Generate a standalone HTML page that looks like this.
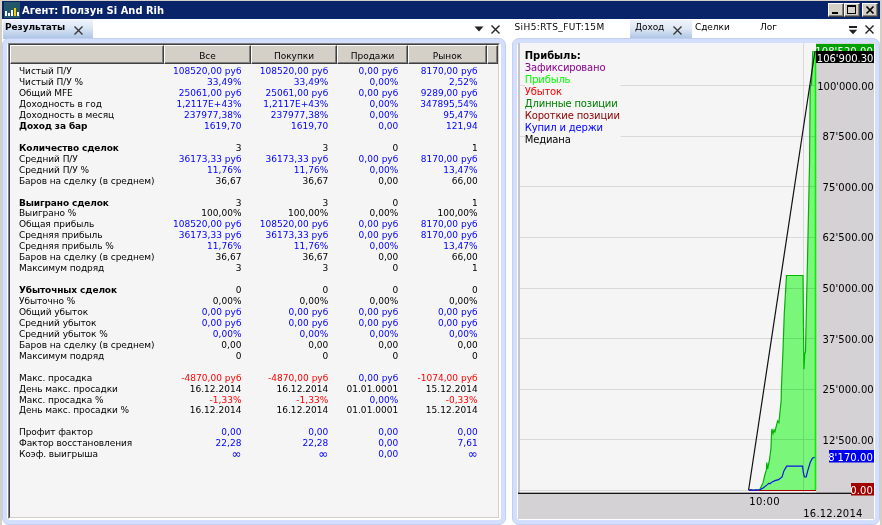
<!DOCTYPE html><html lang="ru"><head><meta charset="utf-8"><title>Агент: Ползун Si And Rih</title><style>
*{margin:0;padding:0;box-sizing:border-box}
html,body{width:882px;height:525px;overflow:hidden;background:#fff}
body{position:relative;font-family:"DejaVu Sans", "Liberation Sans", sans-serif;font-size:9px;line-height:11px;color:#000}
.abs{position:absolute}
.t{position:absolute;white-space:nowrap;height:11px;line-height:11px;letter-spacing:-0.07px}
.r{text-align:right;letter-spacing:0.03px}
.b{color:#0000ff} .k{color:#000} .rd{color:#ff0000}
.bold{font-weight:bold;letter-spacing:-0.12px}
.hc{position:absolute;top:45px;height:19px;background:#d4d0c8;border-left:1px solid #fff;border-top:1px solid #fff;border-right:1px solid #404040;border-bottom:1px solid #404040;text-align:center;line-height:17px}
.hc i{position:absolute;right:0;bottom:0;top:0;width:1px;background:#808080}
.hc b{position:absolute;left:0;right:0;bottom:0;height:1px;background:#808080}
.hc span{font-style:normal;font-weight:normal;position:relative;top:2px}
.wb{position:absolute;top:3px;width:16px;height:14px;background:#d4d0c8;border:1px solid;border-color:#fff #404040 #404040 #fff;box-shadow:inset -1px -1px 0 #808080}
</style></head><body><div id="root" style="position:absolute;left:0;top:0;width:882px;height:525px;will-change:transform">
<div class="abs" style="left:0;top:0;width:882px;height:525px;background:#d4d0c8"></div>
<div class="abs" style="left:2px;top:19px;width:878px;height:506px;background:#fff"></div>
<div class="abs" style="left:2px;top:1px;width:878px;height:18px;background:#0a246a"></div>
<svg class="abs" style="left:4px;top:2px" width="16" height="16" viewBox="0 0 16 16"><rect width="16" height="16" fill="#22576b"/><rect x="1" y="9" width="2" height="5" fill="#fff"/><rect x="4" y="11" width="2" height="3" fill="#fff"/><rect x="7" y="8" width="2" height="6" fill="#fff"/><rect x="10" y="6" width="2" height="8" fill="#ffcc00"/><rect x="13" y="10" width="2" height="4" fill="#fff"/></svg>
<div class="t bold" style="left:22px;top:4px;color:#fff;font-family:'DejaVu Sans Condensed','DejaVu Sans','Liberation Sans',sans-serif;font-size:11px;line-height:13px;height:13px;letter-spacing:0.02px" id="title">Агент: Ползун Si And Rih</div>
<div class="wb" style="left:828px"><svg width="14" height="12" style="position:absolute;left:0;top:0"><rect x="3" y="8" width="6" height="2" fill="#000"/></svg></div>
<div class="wb" style="left:844px"><svg width="14" height="12" style="position:absolute;left:0;top:0"><rect x="2.5" y="2" width="8" height="7.5" fill="none" stroke="#000" stroke-width="1"/><rect x="2" y="1" width="9" height="2" fill="#000"/></svg></div>
<div class="wb" style="left:862px"><svg width="14" height="12" style="position:absolute;left:0;top:0"><path d="M3.5 2.5 L10.5 9.5 M10.5 2.5 L3.5 9.5" stroke="#000" stroke-width="1.7" fill="none"/></svg></div>
<div class="abs" style="left:3px;top:20px;width:90px;height:19px;background:linear-gradient(#edf3fb,#dbe6f5 40%,#a9c3e4)"></div>
<div class="t bold" style="left:5px;top:22px;letter-spacing:-0.07px" id="tab1">Результаты</div>
<svg class="abs" style="left:73px;top:24.5px" width="12" height="12"><path d="M1.5 1.5 L9.5 9.5 M9.5 1.5 L1.5 9.5" stroke="#333" stroke-width="1.3" fill="none"/></svg>
<svg class="abs" style="left:474px;top:25px" width="10" height="8"><path d="M0.5 1.5 H9.5 L5 6.5 Z" fill="#222"/></svg>
<svg class="abs" style="left:490px;top:24px" width="12" height="12"><path d="M1.5 1.5 L9.5 9.5 M9.5 1.5 L1.5 9.5" stroke="#222" stroke-width="1.4" fill="none"/></svg>
<div class="abs" style="left:2px;top:38px;width:504px;height:487px;border-radius:7px;background:#d3dffc;border:1px solid #c2cef0"></div>
<div class="abs" style="left:7px;top:43px;width:494px;height:477px;background:#fff;border-radius:3px"></div>
<div class="abs" style="left:8px;top:43px;width:492px;height:476px;background:#f5f5f5;border:1px solid;border-color:#808080 #fff #fff #808080"></div>
<div class="abs" style="left:9px;top:44px;width:490px;height:474px;border:1px solid;border-color:#404040 #d4d0c8 #d4d0c8 #404040"></div>
<div class="hc" style="left:10px;width:154px"><i></i><b></b><span></span></div>
<div class="hc" style="left:164px;width:87px"><i></i><b></b><span>Все</span></div>
<div class="hc" style="left:251px;width:86px"><i></i><b></b><span>Покупки</span></div>
<div class="hc" style="left:337px;width:71px"><i></i><b></b><span>Продажи</span></div>
<div class="hc" style="left:408px;width:79px"><i></i><b></b><span>Рынок</span></div>
<div class="hc" style="left:487px;width:11px"><i></i><b></b><span></span></div>
<div class="t" style="left:19px;top:66px">Чистый П/У</div>
<div class="t r b" style="right:640.5px;top:66px">108520,00 руб</div>
<div class="t r b" style="right:553.7px;top:66px">108520,00 руб</div>
<div class="t r b" style="right:483.7px;top:66px">0,00 руб</div>
<div class="t r b" style="right:404.3px;top:66px">8170,00 руб</div>
<div class="t" style="left:19px;top:77px">Чистый П/У %</div>
<div class="t r b" style="right:640.5px;top:77px">33,49%</div>
<div class="t r b" style="right:553.7px;top:77px">33,49%</div>
<div class="t r b" style="right:483.7px;top:77px">0,00%</div>
<div class="t r b" style="right:404.3px;top:77px">2,52%</div>
<div class="t" style="left:19px;top:88px">Общий MFE</div>
<div class="t r b" style="right:640.5px;top:88px">25061,00 руб</div>
<div class="t r b" style="right:553.7px;top:88px">25061,00 руб</div>
<div class="t r b" style="right:483.7px;top:88px">0,00 руб</div>
<div class="t r b" style="right:404.3px;top:88px">9289,00 руб</div>
<div class="t" style="left:19px;top:99px">Доходность в год</div>
<div class="t r b" style="right:640.5px;top:99px">1,2117E+43%</div>
<div class="t r b" style="right:553.7px;top:99px">1,2117E+43%</div>
<div class="t r b" style="right:483.7px;top:99px">0,00%</div>
<div class="t r b" style="right:404.3px;top:99px">347895,54%</div>
<div class="t" style="left:19px;top:110px">Доходность в месяц</div>
<div class="t r b" style="right:640.5px;top:110px">237977,38%</div>
<div class="t r b" style="right:553.7px;top:110px">237977,38%</div>
<div class="t r b" style="right:483.7px;top:110px">0,00%</div>
<div class="t r b" style="right:404.3px;top:110px">95,47%</div>
<div class="t bold" style="left:19px;top:121px">Доход за бар</div>
<div class="t r b" style="right:640.5px;top:121px">1619,70</div>
<div class="t r b" style="right:553.7px;top:121px">1619,70</div>
<div class="t r b" style="right:483.7px;top:121px">0,00</div>
<div class="t r b" style="right:404.3px;top:121px">121,94</div>
<div class="t bold" style="left:19px;top:143px">Количество сделок</div>
<div class="t r k" style="right:640.5px;top:143px">3</div>
<div class="t r k" style="right:553.7px;top:143px">3</div>
<div class="t r k" style="right:483.7px;top:143px">0</div>
<div class="t r k" style="right:404.3px;top:143px">1</div>
<div class="t" style="left:19px;top:154px">Средний П/У</div>
<div class="t r b" style="right:640.5px;top:154px">36173,33 руб</div>
<div class="t r b" style="right:553.7px;top:154px">36173,33 руб</div>
<div class="t r b" style="right:483.7px;top:154px">0,00 руб</div>
<div class="t r b" style="right:404.3px;top:154px">8170,00 руб</div>
<div class="t" style="left:19px;top:165px">Средний П/У %</div>
<div class="t r b" style="right:640.5px;top:165px">11,76%</div>
<div class="t r b" style="right:553.7px;top:165px">11,76%</div>
<div class="t r b" style="right:483.7px;top:165px">0,00%</div>
<div class="t r b" style="right:404.3px;top:165px">13,47%</div>
<div class="t" style="left:19px;top:176px">Баров на сделку (в среднем)</div>
<div class="t r k" style="right:640.5px;top:176px">36,67</div>
<div class="t r k" style="right:553.7px;top:176px">36,67</div>
<div class="t r k" style="right:483.7px;top:176px">0,00</div>
<div class="t r k" style="right:404.3px;top:176px">66,00</div>
<div class="t bold" style="left:19px;top:198px">Выиграно сделок</div>
<div class="t r k" style="right:640.5px;top:198px">3</div>
<div class="t r k" style="right:553.7px;top:198px">3</div>
<div class="t r k" style="right:483.7px;top:198px">0</div>
<div class="t r k" style="right:404.3px;top:198px">1</div>
<div class="t" style="left:19px;top:208px">Выиграно %</div>
<div class="t r k" style="right:640.5px;top:208px">100,00%</div>
<div class="t r k" style="right:553.7px;top:208px">100,00%</div>
<div class="t r k" style="right:483.7px;top:208px">0,00%</div>
<div class="t r k" style="right:404.3px;top:208px">100,00%</div>
<div class="t" style="left:19px;top:219px">Общая прибыль</div>
<div class="t r b" style="right:640.5px;top:219px">108520,00 руб</div>
<div class="t r b" style="right:553.7px;top:219px">108520,00 руб</div>
<div class="t r b" style="right:483.7px;top:219px">0,00 руб</div>
<div class="t r b" style="right:404.3px;top:219px">8170,00 руб</div>
<div class="t" style="left:19px;top:230px">Средняя прибыль</div>
<div class="t r b" style="right:640.5px;top:230px">36173,33 руб</div>
<div class="t r b" style="right:553.7px;top:230px">36173,33 руб</div>
<div class="t r b" style="right:483.7px;top:230px">0,00 руб</div>
<div class="t r b" style="right:404.3px;top:230px">8170,00 руб</div>
<div class="t" style="left:19px;top:241px">Средняя прибыль %</div>
<div class="t r b" style="right:640.5px;top:241px">11,76%</div>
<div class="t r b" style="right:553.7px;top:241px">11,76%</div>
<div class="t r b" style="right:483.7px;top:241px">0,00%</div>
<div class="t r b" style="right:404.3px;top:241px">13,47%</div>
<div class="t" style="left:19px;top:252px">Баров на сделку (в среднем)</div>
<div class="t r k" style="right:640.5px;top:252px">36,67</div>
<div class="t r k" style="right:553.7px;top:252px">36,67</div>
<div class="t r k" style="right:483.7px;top:252px">0,00</div>
<div class="t r k" style="right:404.3px;top:252px">66,00</div>
<div class="t" style="left:19px;top:263px">Максимум подряд</div>
<div class="t r k" style="right:640.5px;top:263px">3</div>
<div class="t r k" style="right:553.7px;top:263px">3</div>
<div class="t r k" style="right:483.7px;top:263px">0</div>
<div class="t r k" style="right:404.3px;top:263px">1</div>
<div class="t bold" style="left:19px;top:285px">Убыточных сделок</div>
<div class="t r k" style="right:640.5px;top:285px">0</div>
<div class="t r k" style="right:553.7px;top:285px">0</div>
<div class="t r k" style="right:483.7px;top:285px">0</div>
<div class="t r k" style="right:404.3px;top:285px">0</div>
<div class="t" style="left:19px;top:296px">Убыточно %</div>
<div class="t r k" style="right:640.5px;top:296px">0,00%</div>
<div class="t r k" style="right:553.7px;top:296px">0,00%</div>
<div class="t r k" style="right:483.7px;top:296px">0,00%</div>
<div class="t r k" style="right:404.3px;top:296px">0,00%</div>
<div class="t" style="left:19px;top:307px">Общий убыток</div>
<div class="t r b" style="right:640.5px;top:307px">0,00 руб</div>
<div class="t r b" style="right:553.7px;top:307px">0,00 руб</div>
<div class="t r b" style="right:483.7px;top:307px">0,00 руб</div>
<div class="t r b" style="right:404.3px;top:307px">0,00 руб</div>
<div class="t" style="left:19px;top:318px">Средний убыток</div>
<div class="t r b" style="right:640.5px;top:318px">0,00 руб</div>
<div class="t r b" style="right:553.7px;top:318px">0,00 руб</div>
<div class="t r b" style="right:483.7px;top:318px">0,00 руб</div>
<div class="t r b" style="right:404.3px;top:318px">0,00 руб</div>
<div class="t" style="left:19px;top:329px">Средний убыток %</div>
<div class="t r b" style="right:640.5px;top:329px">0,00%</div>
<div class="t r b" style="right:553.7px;top:329px">0,00%</div>
<div class="t r b" style="right:483.7px;top:329px">0,00%</div>
<div class="t r b" style="right:404.3px;top:329px">0,00%</div>
<div class="t" style="left:19px;top:340px">Баров на сделку (в среднем)</div>
<div class="t r k" style="right:640.5px;top:340px">0,00</div>
<div class="t r k" style="right:553.7px;top:340px">0,00</div>
<div class="t r k" style="right:483.7px;top:340px">0,00</div>
<div class="t r k" style="right:404.3px;top:340px">0,00</div>
<div class="t" style="left:19px;top:351px">Максимум подряд</div>
<div class="t r k" style="right:640.5px;top:351px">0</div>
<div class="t r k" style="right:553.7px;top:351px">0</div>
<div class="t r k" style="right:483.7px;top:351px">0</div>
<div class="t r k" style="right:404.3px;top:351px">0</div>
<div class="t" style="left:19px;top:373px">Макс. просадка</div>
<div class="t r rd" style="right:640.5px;top:373px">-4870,00 руб</div>
<div class="t r rd" style="right:553.7px;top:373px">-4870,00 руб</div>
<div class="t r b" style="right:483.7px;top:373px">0,00 руб</div>
<div class="t r rd" style="right:404.3px;top:373px">-1074,00 руб</div>
<div class="t" style="left:19px;top:384px">День макс. просадки</div>
<div class="t r k" style="right:640.5px;top:384px">16.12.2014</div>
<div class="t r k" style="right:553.7px;top:384px">16.12.2014</div>
<div class="t r k" style="right:483.7px;top:384px">01.01.0001</div>
<div class="t r k" style="right:404.3px;top:384px">15.12.2014</div>
<div class="t" style="left:19px;top:395px">Макс. просадка %</div>
<div class="t r rd" style="right:640.5px;top:395px">-1,33%</div>
<div class="t r rd" style="right:553.7px;top:395px">-1,33%</div>
<div class="t r b" style="right:483.7px;top:395px">0,00%</div>
<div class="t r rd" style="right:404.3px;top:395px">-0,33%</div>
<div class="t" style="left:19px;top:405px">День макс. просадки %</div>
<div class="t r k" style="right:640.5px;top:405px">16.12.2014</div>
<div class="t r k" style="right:553.7px;top:405px">16.12.2014</div>
<div class="t r k" style="right:483.7px;top:405px">01.01.0001</div>
<div class="t r k" style="right:404.3px;top:405px">15.12.2014</div>
<div class="t" style="left:19px;top:427px">Профит фактор</div>
<div class="t r b" style="right:640.5px;top:427px">0,00</div>
<div class="t r b" style="right:553.7px;top:427px">0,00</div>
<div class="t r b" style="right:483.7px;top:427px">0,00</div>
<div class="t r b" style="right:404.3px;top:427px">0,00</div>
<div class="t" style="left:19px;top:438px">Фактор восстановления</div>
<div class="t r b" style="right:640.5px;top:438px">22,28</div>
<div class="t r b" style="right:553.7px;top:438px">22,28</div>
<div class="t r b" style="right:483.7px;top:438px">0,00</div>
<div class="t r b" style="right:404.3px;top:438px">7,61</div>
<div class="t" style="left:19px;top:449px">Коэф. выигрыша</div>
<div class="t r b" style="right:640.5px;top:449px"><span style="font-size:12px;line-height:0;position:relative;top:0.5px">∞</span></div>
<div class="t r b" style="right:553.7px;top:449px"><span style="font-size:12px;line-height:0;position:relative;top:0.5px">∞</span></div>
<div class="t r b" style="right:483.7px;top:449px">0,00</div>
<div class="t r b" style="right:404.3px;top:449px"><span style="font-size:12px;line-height:0;position:relative;top:0.5px">∞</span></div>
<div class="t" style="left:514.4px;top:22px;letter-spacing:0.42px" id="rt0">SiH5:RTS_FUT:15M</div>
<div class="abs" style="left:630px;top:20px;width:62px;height:19px;background:linear-gradient(#eef3fa,#dfe8f4 45%,#a9c3e4)"></div>
<div class="t" style="left:635px;top:22px" id="rt1">Доход</div>
<svg class="abs" style="left:672px;top:25px" width="12" height="12"><path d="M1.5 1.5 L9.5 9.5 M9.5 1.5 L1.5 9.5" stroke="#333" stroke-width="1.3" fill="none"/></svg>
<div class="t" style="left:695px;top:22px" id="rt2">Сделки</div>
<div class="t" style="left:760px;top:22px" id="rt3">Лог</div>
<svg class="abs" style="left:848px;top:25px" width="10" height="10"><rect x="1" y="1" width="8" height="2" fill="#222"/><path d="M0.8 4.7 H9.2 L5 9.2 Z" fill="#222"/></svg>
<svg class="abs" style="left:864px;top:24px" width="12" height="12"><path d="M1.5 1.5 L9.5 9.5 M9.5 1.5 L1.5 9.5" stroke="#222" stroke-width="1.4" fill="none"/></svg>
<div class="abs" style="left:512px;top:38px;width:368px;height:487px;border-radius:7px;background:#d3dffc;border:1px solid #c2cef0"></div>
<div class="abs" style="left:517px;top:43px;width:358px;height:477px;background:#fff;border-radius:3px"></div>
<svg class="abs" style="left:0;top:0" width="882" height="525" viewBox="0 0 882 525" font-family='"DejaVu Sans", "Liberation Sans", sans-serif' font-size="10" letter-spacing="0.09"><rect x="518" y="43" width="356" height="476" fill="#d5d2d5"/><rect x="518" y="43" width="298" height="450" fill="#f5f5f5"/><rect x="518" y="43" width="2" height="450" fill="#c8c4c8"/><line x1="520" x2="816" y1="490.5" y2="490.5" stroke="#d9d9d9" stroke-width="1"/><line x1="520" x2="816" y1="439.5" y2="439.5" stroke="#d9d9d9" stroke-width="1"/><line x1="520" x2="816" y1="389.5" y2="389.5" stroke="#d9d9d9" stroke-width="1"/><line x1="520" x2="816" y1="338.5" y2="338.5" stroke="#d9d9d9" stroke-width="1"/><line x1="520" x2="816" y1="288.5" y2="288.5" stroke="#d9d9d9" stroke-width="1"/><line x1="520" x2="816" y1="237.5" y2="237.5" stroke="#d9d9d9" stroke-width="1"/><line x1="520" x2="816" y1="186.5" y2="186.5" stroke="#d9d9d9" stroke-width="1"/><line x1="520" x2="816" y1="136.5" y2="136.5" stroke="#d9d9d9" stroke-width="1"/><line x1="520" x2="816" y1="85.5" y2="85.5" stroke="#d9d9d9" stroke-width="1"/><line x1="803.5" x2="803.5" y1="43" y2="496" stroke="#d9d9d9" stroke-width="1"/><rect x="525" y="47" width="95.5" height="100" fill="#f5f5f5"/><polygon points="749,490 759.5,490 761,487 763.1,482.4 764.6,476 766.4,469.7 766.8,462.5 767.6,468.8 769.5,459.8 770.9,448.9 771.8,429 773.1,433.5 774,429.9 774.9,431.7 777.6,420.8 778.9,422.6 780.3,409 781.2,400 781.4,388 783,350 784.3,313 786.5,275.5 803,275.5 803.5,330 804,369.3 804.7,354 805.5,352 806.6,300 807.5,260 809.6,160 810.2,86 811.5,85 812.8,51 815.5,51 815.5,490" fill="#7af67a"/><clipPath id="gc"><polygon points="749,490 759.5,490 761,487 763.1,482.4 764.6,476 766.4,469.7 766.8,462.5 767.6,468.8 769.5,459.8 770.9,448.9 771.8,429 773.1,433.5 774,429.9 774.9,431.7 777.6,420.8 778.9,422.6 780.3,409 781.2,400 781.4,388 783,350 784.3,313 786.5,275.5 803,275.5 803.5,330 804,369.3 804.7,354 805.5,352 806.6,300 807.5,260 809.6,160 810.2,86 811.5,85 812.8,51 815.5,51 815.5,490"/></clipPath><g clip-path="url(#gc)" stroke="#68dc68" stroke-width="1"><line x1="750" x2="815" y1="439.5" y2="439.5"/><line x1="750" x2="815" y1="389.5" y2="389.5"/><line x1="750" x2="815" y1="338.5" y2="338.5"/><line x1="750" x2="815" y1="288.5" y2="288.5"/><line x1="750" x2="815" y1="237.5" y2="237.5"/><line x1="750" x2="815" y1="186.5" y2="186.5"/><line x1="750" x2="815" y1="136.5" y2="136.5"/><line x1="750" x2="815" y1="85.5" y2="85.5"/><line x1="803.5" x2="803.5" y1="43" y2="490"/></g><polyline points="749,490 759.5,490 761,487 763.1,482.4 764.6,476 766.4,469.7 766.8,462.5 767.6,468.8 769.5,459.8 770.9,448.9 771.8,429 773.1,433.5 774,429.9 774.9,431.7 777.6,420.8 778.9,422.6 780.3,409 781.2,400 781.4,388 783,350 784.3,313 786.5,275.5 803,275.5 803.5,330 804,369.3 804.7,354 805.5,352 806.6,300 807.5,260 809.6,160 810.2,86 811.5,85 812.8,51" fill="none" stroke="#00b400" stroke-width="1.2"/><line x1="815.5" x2="815.5" y1="51" y2="490" stroke="#00f000" stroke-width="1.6"/><line x1="749" x2="816" y1="490.5" y2="490.5" stroke="#b00000" stroke-width="1"/><polyline points="748.6,490.3 751,489.6 753,490.4 756,489.8 759.5,490 763.1,487.9 766.7,485.1 769,483.2 770,483.8 772.2,481.9 775,480.6 778.5,479.7 782.1,477 784,470.7 786.7,466.1 802.6,466.1 803.3,472.5 804.4,477 806.2,477 807.5,471.6 810.2,462.5 812.4,458.3 814.6,457.2" fill="none" stroke="#0a14e6" stroke-width="1.2"/><line x1="748.6" y1="490" x2="815" y2="51" stroke="#111" stroke-width="1.2"/><rect x="518" y="492.7" width="333" height="1.2" fill="#000"/><text x="873.8" y="443.8" text-anchor="end" fill="#000">12'500.00</text><text x="873.8" y="393.2" text-anchor="end" fill="#000">25'000.00</text><text x="873.8" y="342.6" text-anchor="end" fill="#000">37'500.00</text><text x="873.8" y="292.0" text-anchor="end" fill="#000">50'000.00</text><text x="873.8" y="241.4" text-anchor="end" fill="#000">62'500.00</text><text x="873.8" y="190.8" text-anchor="end" fill="#000">75'000.00</text><text x="873.8" y="140.2" text-anchor="end" fill="#000">87'500.00</text><text x="873.8" y="89.6" text-anchor="end" fill="#000" letter-spacing="-0.03">100'000.00</text><rect x="816" y="44" width="58" height="8" fill="#00a000"/><svg x="816" y="44" width="58" height="7" overflow="hidden"><text x="57" y="11" text-anchor="end" fill="#fff" font-size="10">108'520.00</text></svg><rect x="816" y="51" width="58" height="12" fill="#000"/><text x="873.4" y="61.5" text-anchor="end" fill="#fff" letter-spacing="-0.03">106'900.30</text><rect x="829" y="450" width="45" height="12.5" fill="#0000f0"/><text x="873" y="460.5" text-anchor="end" fill="#fff">8'170.00</text><rect x="851" y="483" width="23" height="12.5" fill="#a00000"/><text x="873" y="493.5" text-anchor="end" fill="#fff">0.00</text><text x="749.3" y="505.4" fill="#000" letter-spacing="0.4">10:00</text><text x="803.3" y="517.4" fill="#000" letter-spacing="0.2">16.12.2014</text><text x="524.8" y="59" fill="#000" letter-spacing="-0.05" font-weight="bold">Прибыль:</text><text x="524.8" y="71" fill="#8b008b" letter-spacing="-0.17">Зафиксировано</text><text x="524.8" y="83" fill="#00ff00" letter-spacing="-0.17">Прибыль</text><text x="524.8" y="95" fill="#ff0000" letter-spacing="-0.17">Убыток</text><text x="524.8" y="107" fill="#008000" letter-spacing="-0.17">Длинные позиции</text><text x="524.8" y="119" fill="#8b0000" letter-spacing="-0.17">Короткие позиции</text><text x="524.8" y="131" fill="#0000ff" letter-spacing="-0.17">Купил и держи</text><text x="524.8" y="143" fill="#000" letter-spacing="-0.17">Медиана</text></svg>
</div></body></html>
